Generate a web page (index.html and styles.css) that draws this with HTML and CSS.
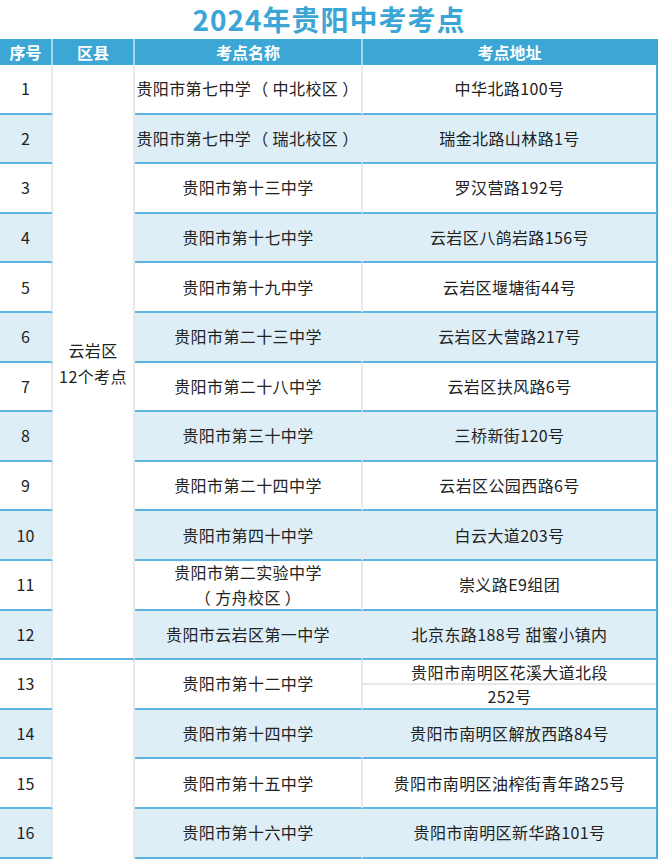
FILE: index.html
```html
<!DOCTYPE html>
<html lang="zh-CN">
<head>
<meta charset="utf-8">
<title>2024年贵阳中考考点</title>
<link rel="stylesheet" href="styles.css">
</head>
<body>
<div class="page">
  <h1 class="title">2024年贵阳中考考点</h1>
  <div class="grid">
    <div class="hd">序号</div>
    <div class="hd">区县</div>
    <div class="hd">考点名称</div>
    <div class="hd last">考点地址</div>

    <div class="dist d1">云岩区<br>12个考点</div>
    <div class="dist d2"></div>

    <div class="c n r1">1</div><div class="c s r1">贵阳市第七中学<span class="pl">（</span>中北校区<span class="pr">）</span></div><div class="c a r1">中华北路100号</div>
    <div class="c n r2 alt">2</div><div class="c s r2 alt">贵阳市第七中学<span class="pl">（</span>瑞北校区<span class="pr">）</span></div><div class="c a r2 alt">瑞金北路山林路1号</div>
    <div class="c n r3">3</div><div class="c s r3">贵阳市第十三中学</div><div class="c a r3">罗汉营路192号</div>
    <div class="c n r4 alt">4</div><div class="c s r4 alt">贵阳市第十七中学</div><div class="c a r4 alt">云岩区八鸽岩路156号</div>
    <div class="c n r5">5</div><div class="c s r5">贵阳市第十九中学</div><div class="c a r5">云岩区堰塘街44号</div>
    <div class="c n r6 alt">6</div><div class="c s r6 alt">贵阳市第二十三中学</div><div class="c a r6 alt">云岩区大营路217号</div>
    <div class="c n r7">7</div><div class="c s r7">贵阳市第二十八中学</div><div class="c a r7">云岩区扶风路6号</div>
    <div class="c n r8 alt">8</div><div class="c s r8 alt">贵阳市第三十中学</div><div class="c a r8 alt">三桥新街120号</div>
    <div class="c n r9">9</div><div class="c s r9">贵阳市第二十四中学</div><div class="c a r9">云岩区公园西路6号</div>
    <div class="c n r10 alt">10</div><div class="c s r10 alt">贵阳市第四十中学</div><div class="c a r10 alt">白云大道203号</div>
    <div class="c n r11">11</div><div class="c s r11"><span class="lines">贵阳市第二实验中学<br><span class="pl">（</span>方舟校区<span class="pr">）</span></span></div><div class="c a r11">崇义路E9组团</div>
    <div class="c n r12 alt">12</div><div class="c s r12 alt">贵阳市云岩区第一中学</div><div class="c a r12 alt">北京东路188号 甜蜜小镇内</div>
    <div class="c n r13">13</div><div class="c s r13">贵阳市第十二中学</div><div class="c a r13 split"><span class="part">贵阳市南明区花溪大道北段</span><span class="part sep">252号</span></div>
    <div class="c n r14 alt">14</div><div class="c s r14 alt">贵阳市第十四中学</div><div class="c a r14 alt">贵阳市南明区解放西路84号</div>
    <div class="c n r15">15</div><div class="c s r15">贵阳市第十五中学</div><div class="c a r15">贵阳市南明区油榨街青年路25号</div>
    <div class="c n r16 alt">16</div><div class="c s r16 alt">贵阳市第十六中学</div><div class="c a r16 alt">贵阳市南明区新华路101号</div>
  </div>
</div>
</body>
</html>
```

FILE: styles.css
```css
html, body {
  margin: 0;
  padding: 0;
  background: #ffffff;
}
body {
  font-family: "Noto Sans CJK SC", "Noto Sans", sans-serif;
  color: #222222;
  overflow: hidden;
}
.page {
  width: 658px;
}
.title {
  margin: 0;
  height: 39px;
  line-height: 39px;
  text-align: center;
  font-size: 28px;
  font-weight: 700;
  color: #3ba6d6;
  letter-spacing: 1px;
}
.grid {
  display: grid;
  grid-template-columns: 53px 82px 228px 295px;
  grid-template-rows: 26px repeat(16, 49.6px);
}
.hd {
  background: #3ca6d5;
  color: #ffffff;
  font-weight: 700;
  font-size: 16px;
  display: flex;
  align-items: center;
  justify-content: center;
  border-right: 2px solid #a9d6ee;
  box-sizing: border-box;
  line-height: 1;
}
.hd.last {
  border-right: 2px solid #3ca6d5;
}
.c {
  box-sizing: border-box;
  display: flex;
  align-items: center;
  justify-content: center;
  text-align: center;
  font-size: 16px;
  line-height: 25px;
  border-bottom: 2px solid #5cb5e2;
  border-right: 2px solid #e8e8e8;
  background: #ffffff;
  letter-spacing: 0.4px;
}
.c.alt {
  background: #ddeef7;
}
.c.n { grid-column: 1; letter-spacing: 0; }
.c.s { grid-column: 3; }
.c.a {
  grid-column: 4;
  border-right: 2px solid #4aaddc;
}
.pl { margin: 0 4px 0 1px; }
.pr { margin: 0 1px 0 4px; }
.lines { display: block; }
.r1 { grid-row: 2; }
.r2 { grid-row: 3; }
.r3 { grid-row: 4; }
.r4 { grid-row: 5; }
.r5 { grid-row: 6; }
.r6 { grid-row: 7; }
.r7 { grid-row: 8; }
.r8 { grid-row: 9; }
.r9 { grid-row: 10; }
.r10 { grid-row: 11; }
.r11 { grid-row: 12; }
.r12 { grid-row: 13; }
.r13 { grid-row: 14; }
.r14 { grid-row: 15; }
.r15 { grid-row: 16; }
.r16 { grid-row: 17; }
.dist {
  grid-column: 2;
  box-sizing: border-box;
  display: flex;
  align-items: center;
  justify-content: center;
  text-align: center;
  font-size: 16px;
  line-height: 26px;
  background: #ffffff;
  border-right: 2px solid #e8e8e8;
  border-bottom: 2px solid #5cb5e2;
  letter-spacing: 0.4px;
}
.dist.d1 { grid-row: 2 / span 12; padding-top: 2px; }
.dist.d2 { grid-row: 14 / span 4; border-bottom: none; }
.c.split {
  flex-direction: column;
  align-items: stretch;
  justify-content: stretch;
}
.part {
  flex: 1;
  display: flex;
  align-items: center;
  justify-content: center;
  line-height: 1;
}
.part.sep {
  border-top: 2px solid #e8e8e8;
}
```
